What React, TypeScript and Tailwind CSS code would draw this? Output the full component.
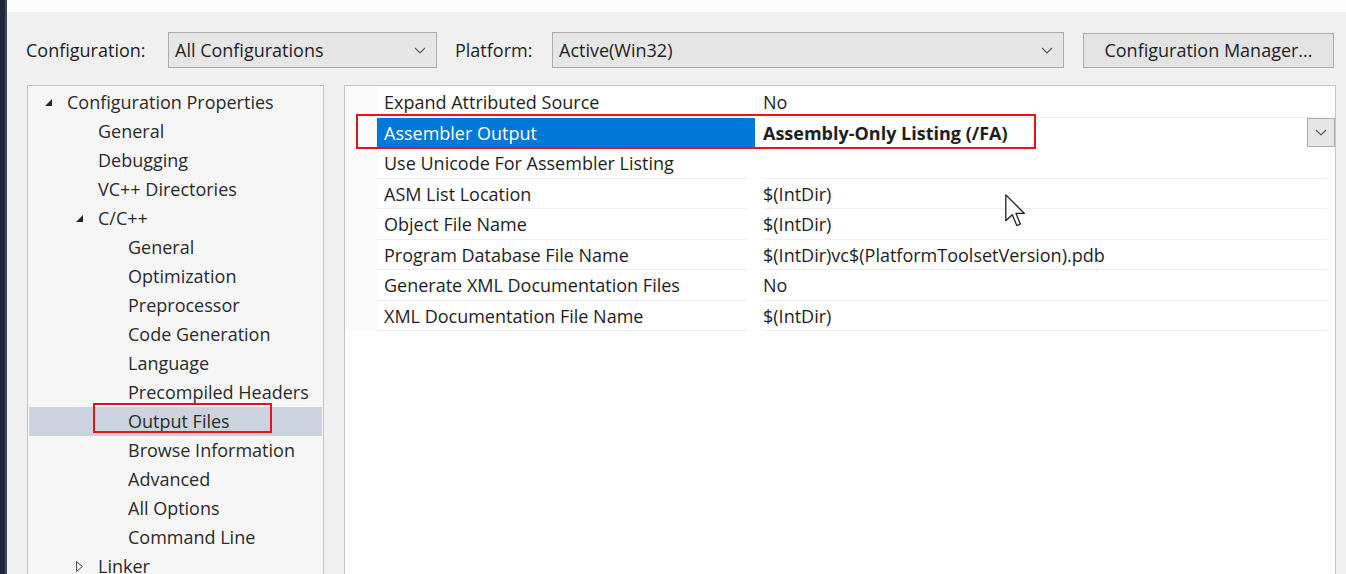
import React from "react";

const font = { fontFamily: '"Open Sans", "Noto Sans", sans-serif' };

function Chevron({ className = "" }: { className?: string }) {
  return (
    <svg width="12" height="7" viewBox="0 0 12 7" className={className}>
      <polyline points="1,1 6,6 11,1" fill="none" stroke="#5a5a5a" strokeWidth="1.2" />
    </svg>
  );
}

function FilledTri() {
  return (
    <svg width="7" height="7" viewBox="0 0 7 7">
      <polygon points="7,0 7,7 0,7" fill="#262626" />
    </svg>
  );
}

function HollowTri() {
  return (
    <svg width="7" height="11" viewBox="0 0 7 11">
      <polygon points="0.6,0.6 6.4,5.5 0.6,10.4" fill="none" stroke="#444" strokeWidth="1" />
    </svg>
  );
}

type TreeItem = { label: string; level: number; tri?: "open" | "closed"; selected?: boolean };

const tree: TreeItem[] = [
  { label: "Configuration Properties", level: 0, tri: "open" },
  { label: "General", level: 1 },
  { label: "Debugging", level: 1 },
  { label: "VC++ Directories", level: 1 },
  { label: "C/C++", level: 1, tri: "open" },
  { label: "General", level: 2 },
  { label: "Optimization", level: 2 },
  { label: "Preprocessor", level: 2 },
  { label: "Code Generation", level: 2 },
  { label: "Language", level: 2 },
  { label: "Precompiled Headers", level: 2 },
  { label: "Output Files", level: 2, selected: true },
  { label: "Browse Information", level: 2 },
  { label: "Advanced", level: 2 },
  { label: "All Options", level: 2 },
  { label: "Command Line", level: 2 },
  { label: "Linker", level: 1, tri: "closed" },
];

const props: { name: string; value: string; selected?: boolean }[] = [
  { name: "Expand Attributed Source", value: "No" },
  { name: "Assembler Output", value: "Assembly-Only Listing (/FA)", selected: true },
  { name: "Use Unicode For Assembler Listing", value: "" },
  { name: "ASM List Location", value: "$(IntDir)" },
  { name: "Object File Name", value: "$(IntDir)" },
  { name: "Program Database File Name", value: "$(IntDir)vc$(PlatformToolsetVersion).pdb" },
  { name: "Generate XML Documentation Files", value: "No" },
  { name: "XML Documentation File Name", value: "$(IntDir)" },
];

export default function App() {
  return (
    <div className="w-[1346px] h-[574px] overflow-hidden flex text-[18px] text-[#1e1e1e]" style={font}>
      <div className="w-[7px] h-full shrink-0 bg-[#1c2634] border-r-2 border-[#3a4a5e]" />
      <div className="flex-1 flex flex-col min-h-0">
        <div className="h-[12px] shrink-0 bg-[#fcfcfc]" />
        <div className="flex-1 min-h-0 bg-[#f0f0f0] flex flex-col">
          {/* header */}
          <div className="flex items-center shrink-0 h-[36px] mt-[20px] pl-[19px]">
            <span className="w-[142px]">Configuration:</span>
            <div className="w-[269px] h-[36px] border border-[#acacac] bg-[#e6e6e6] flex items-center justify-between pl-[6px] pr-[10px]">
              <span>All Configurations</span>
              <Chevron />
            </div>
            <span className="ml-[18px] w-[97px]">Platform:</span>
            <div className="w-[512px] h-[36px] border border-[#acacac] bg-[#e6e6e6] flex items-center justify-between pl-[6px] pr-[10px]">
              <span>Active(Win32)</span>
              <Chevron />
            </div>
            <div className="ml-[19px] w-[251px] h-[35px] border border-[#acacac] bg-[#e3e3e3] flex items-center justify-center">
              Configuration Manager...
            </div>
          </div>
          {/* body */}
          <div className="flex flex-1 min-h-0 mt-[17px] pl-[20px] gap-[20px]">
            {/* tree */}
            <div className="relative shrink-0 w-[297px] h-[520px] border border-[#c4c4c4] bg-[#f6f6f6] pt-[2px] text-[#2a2a2a]">
              {tree.map((t, i) => (
                <div
                  key={i}
                  className={`h-[29px] flex items-center mx-[1px] ${t.selected ? "bg-[#cdd3de]" : ""}`}
                >
                  <div
                    className={`flex items-center justify-center w-[8px] ${
                      t.level === 0 ? "ml-[15px]" : t.level === 1 ? "ml-[46px]" : "ml-[76px]"
                    }`}
                  >
                    {t.tri === "open" && <FilledTri />}
                    {t.tri === "closed" && <HollowTri />}
                  </div>
                  <span className="ml-[15px]">{t.label}</span>
                </div>
              ))}
              <div className="absolute left-[65px] top-[317px] w-[179px] h-[30px] border-2 border-[#e4141b]" />
            </div>
            {/* property grid */}
            <div className="relative shrink-0 w-[992px] h-[520px] border border-[#c4c4c4] bg-white pt-[1px]">
              {props.map((p, i) => (
                <div key={i} className="flex h-[30.5px]">
                  <div className="w-[32px] bg-[#fafafa]" />
                  <div className={`w-[378px] flex ${p.selected ? "bg-[#0078d7] text-white" : ""}`}>
                    <div
                      className={`w-[370px] h-full flex items-center pl-[7px] pt-[2px] ${
                        p.selected ? "" : "border-b border-[#eeeeee]"
                      }`}
                    >
                      {p.name}
                    </div>
                  </div>
                  <div className="flex-1 flex pl-[8px]">
                    <div
                      className={`flex-1 h-full flex items-center ${
                        p.selected ? "font-bold justify-between" : "border-b border-[#eeeeee] mr-[8px] pt-[2px]"
                      }`}
                    >
                      <span className={p.selected ? "pt-[2px]" : ""}>{p.value}</span>
                      {p.selected && (
                        <div className="w-[28px] h-[29px] border border-[#adadad] bg-[#e6e6e6] flex items-center justify-center">
                          <Chevron />
                        </div>
                      )}
                    </div>
                  </div>
                </div>
              ))}
              <div className="absolute left-[11px] top-[28px] w-[680px] h-[35px] border-2 border-[#e4141b]" />
              {/* cursor */}
              <svg
                className="absolute left-[660px] top-[108px]"
                width="21"
                height="34"
                viewBox="-0.5 -0.5 13 21"
              >
                <path
                  d="M0,0 L0,16 L4,12.3 L6.8,19 L9,18 L6.3,11.5 L11.5,11.5 Z"
                  fill="white"
                  stroke="#222"
                  strokeWidth="0.8"
                  strokeLinejoin="round"
                />
              </svg>
            </div>
          </div>
        </div>
      </div>
    </div>
  );
}
